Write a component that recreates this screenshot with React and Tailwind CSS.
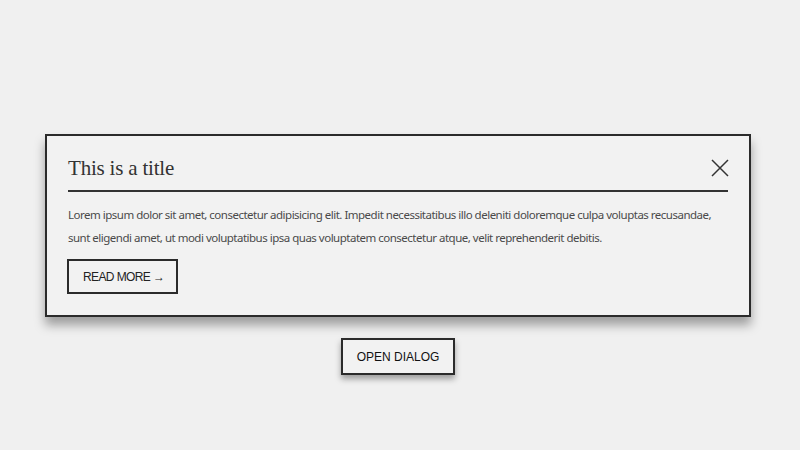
export default function App() {
  return (
    <div className="min-h-screen w-full bg-[#f0f0f0] flex flex-col items-center pt-[134px] pr-[4px]">
      {/* Dialog */}
      <div className="w-[706px] border-2 border-[#2b2b2b] bg-[#f2f2f2] shadow-[0_8px_10px_rgba(0,0,0,0.35)] px-[21px] pt-[18px] pb-[21px]">
        <div className="flex items-center justify-between border-b-2 border-[#333] pb-[8px]">
          <h2 className="text-[21px] leading-[28px] text-[#333] tracking-[-0.2px]" style={{ fontFamily: '"Liberation Serif", serif' }}>
            This is a title
          </h2>
          <button className="w-[20px] h-[20px] flex items-center justify-center mr-[-2px]">
            <svg width="18" height="18" viewBox="0 0 18 18" fill="none" stroke="#333" strokeWidth="1.5">
              <path d="M1 1 L17 17 M17 1 L1 17" />
            </svg>
          </button>
        </div>
        <p className="mt-[11px] text-[11.5px] leading-[23px] tracking-[-0.5px] text-[#4a4a4a]" style={{ fontFamily: '"Noto Sans", sans-serif' }}>
          Lorem ipsum dolor sit amet, consectetur adipisicing elit. Impedit necessitatibus illo deleniti doloremque culpa voluptas recusandae, sunt eligendi amet, ut modi voluptatibus ipsa quas voluptatem consectetur atque, velit reprehenderit debitis.
        </p>
        <button className="mt-[10px] ml-[-1px] h-[35px] pl-[14px] pr-[12px] border-2 border-[#2b2b2b] text-[12px] tracking-[-0.6px] text-[#222] bg-transparent" style={{ fontFamily: '"Liberation Sans", Arial, sans-serif' }}>
          READ MORE →
        </button>
      </div>
      {/* Open dialog button */}
      <button className="mt-[21px] h-[37px] px-[14px] border-2 border-[#2b2b2b] bg-[#f2f2f2] text-[12px] text-[#111] shadow-[0_4px_6px_rgba(0,0,0,0.35)]" style={{ fontFamily: '"Liberation Sans", Arial, sans-serif' }}>
        OPEN DIALOG
      </button>
    </div>
  );
}
